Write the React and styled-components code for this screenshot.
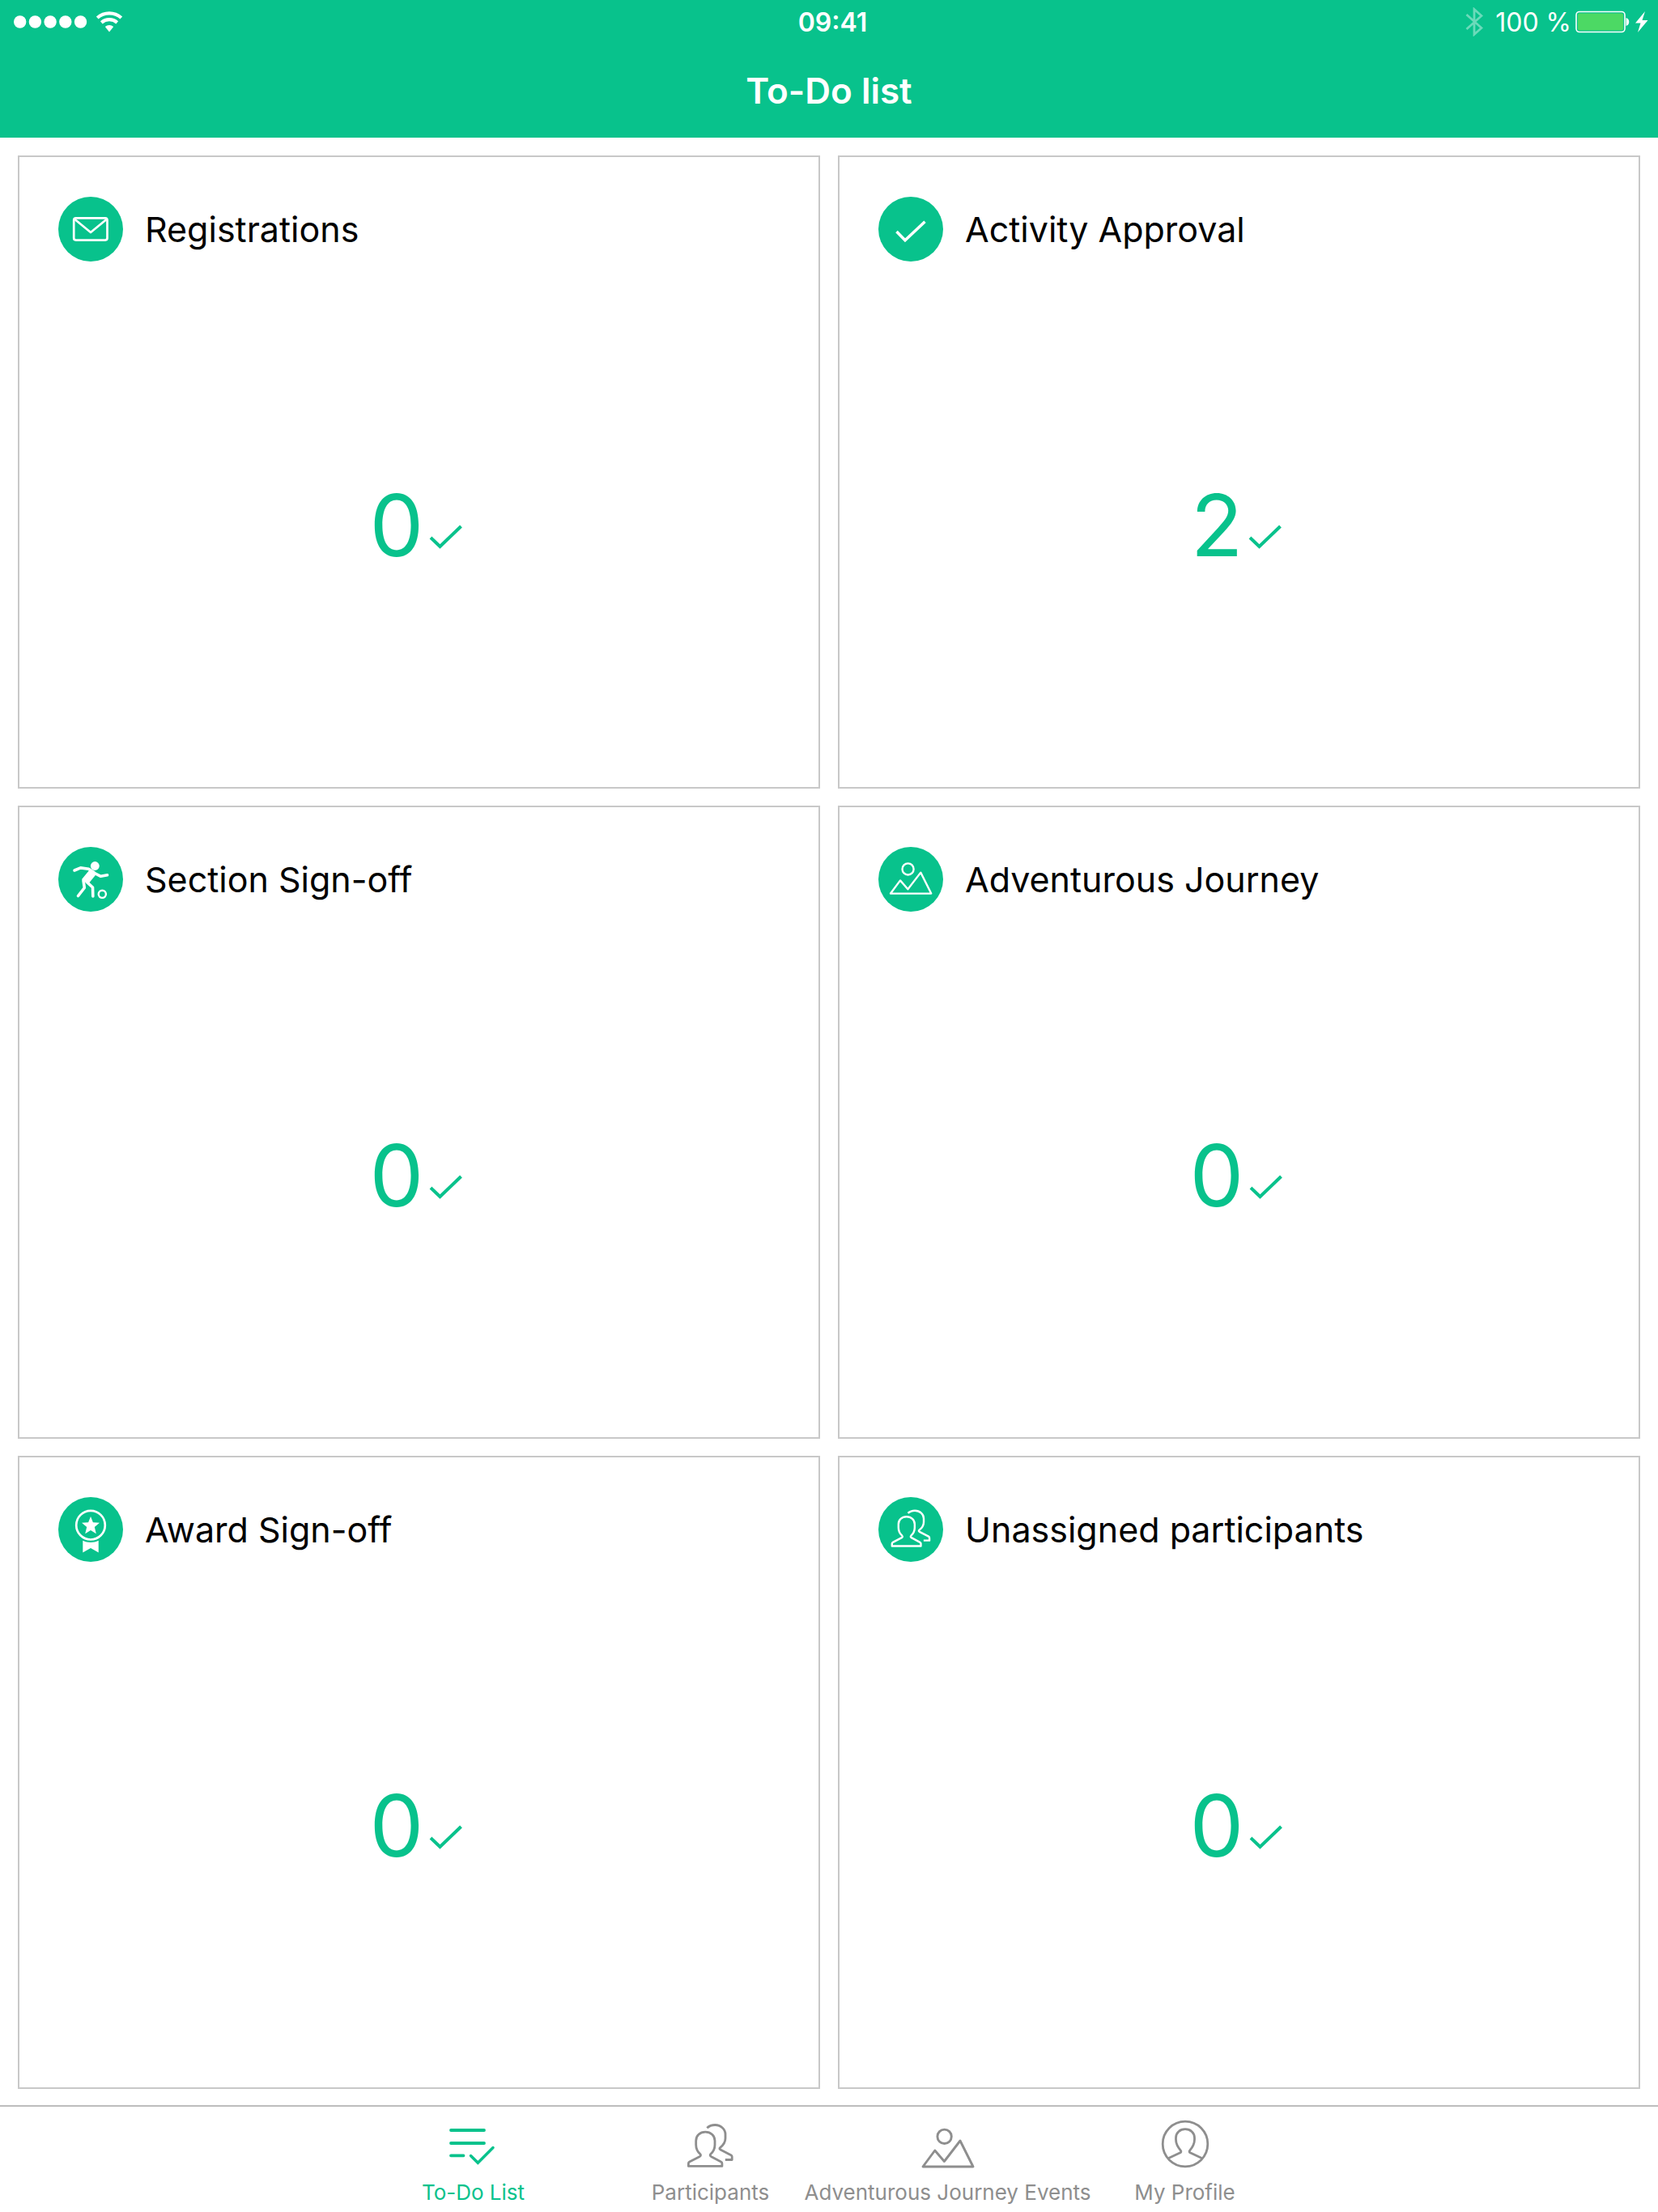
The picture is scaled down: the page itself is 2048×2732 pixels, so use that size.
import React,{useState} from 'react'
import styled,{createGlobalStyle} from 'styled-components';

const GlobalStyle =createGlobalStyle`
*{
  box-sizing:border-box;
}
body{
  margin:0;
  background:#fff;
  font-family:Inter, "Liberation Sans", sans-serif;
  color:#000;
}
svg{
  display:block;
  flex:none;
}`;

const Page =styled.div`
min-height:100vh;
display:flex;
flex-direction:column;
`;

const Header =styled.header`
background:#08c28c;
color:#fff;
h1{
  margin:0;
  padding-bottom:32px;
  text-align:center;
  font-size:44px;
  line-height:52px;
  font-weight:600;
}`;

const StatusBar =styled.div`
display:grid;
grid-template-columns:1fr auto 1fr;
align-items:center;
height:54px;
margin-bottom:32px;
padding:0 8px 0 17px;
font-size:32px;
`;

const StatusGroup =styled.div`
display:flex;
align-items:center;
justify-content:${(props) => (props.$end ? 'flex-end' : 'flex-start')};
gap:${(props) => (props.$end ? '5px' : '10px')};
.bluetooth{
  margin-right:10px;
  opacity:0.4;
}`;

const Time =styled.time`
font-weight:600;
`;

const Grid =styled.main`
flex:1;
display:grid;
grid-template-columns:1fr 1fr;
grid-auto-rows:1fr;
gap:21px 22px;
padding:22px 22px 20px;
`;

const Card =styled.section`
display:flex;
flex-direction:column;
min-height:320px;
padding:49px 48px 0;
border:2px solid #c8c8c8;
`;

const CardTitle =styled.div`
display:flex;
align-items:center;
gap:27px;
h2{
  margin:0;
  font-size:43px;
  line-height:52px;
  font-weight:400;
}`;

const Count =styled.div`
flex:1;
display:flex;
align-items:center;
justify-content:center;
padding-top:3px;
color:#08c28c;
p{
  display:flex;
  align-items:baseline;
  gap:7px;
  margin:0;
  font-size:106px;
  line-height:128px;
}`;

const TabBar =styled.nav`
display:flex;
justify-content:center;
height:132px;
border-top:2px solid #bdbdbd;
`;

const Tab =styled.button`
flex:0 1 293px;
min-width:0;
display:flex;
flex-direction:column;
align-items:center;
gap:14px;
padding:16px 0 0;
border:none;
background:none;
color:${(props) => (props.$active ? '#08c28c' : '#8e8e8e')};
font-family:inherit;
font-size:26px;
line-height:32px;
white-space:nowrap;
cursor:pointer;
`;

const MountainShape = () => (
  <g fill="none" stroke="currentColor" strokeWidth="2.9" strokeLinejoin="round">
    <circle cx="28.6" cy="9.8" r="8.7" />
    <path d="M2 47 16.8 27 28.4 40.5 48 15 64 47z" />
  </g>
)

const PeopleShape = () => (
  <g fill="none" stroke="currentColor" strokeWidth="2.8" strokeLinejoin="round">
    <path d="M22.3 10.2C15.5 10.2 10.7 14.8 10.7 21v5c0 4.6 1.8 8.4 5.2 11.6 1 1 .8 2-.5 2.8L2.7 47c-1 .5-1.3 1-1.3 2v3.4h41.5V49c0-1-.3-1.5-1.3-2L29.3 40.4c-1.3-.8-1.5-1.8-.5-2.8C32.2 34.4 34 30.6 34 26v-5c0-6.2-5-10.8-11.7-10.8z" />
    <path d="M24.3 5.3C27 2.7 30.5 1.5 34.3 1.5 41.5 1.5 47 6.8 47 13v5c0 4.5-2.2 8-6.3 11.4-1.2 1-1 1.8.2 2.5l13 6.800c1 .5 1.3 1 1.3 2V44.5h-8.4" />
  </g>
)

const MailIcon = () => (
  <g fill="none" stroke="#fff" strokeWidth="2.7" strokeLinejoin="round">
    <rect x="19.2" y="26.4" width="41.3" height="27.2" rx="2.5" />
    <path d="M20.5 28 40 44 59.5 28" />
  </g>
)

const CheckIcon = () => (
  <path d="M22.5 43 33 53.7 57.5 30.7" fill="none" stroke="#fff" strokeWidth="3.6" />
)

const FootballIcon = () => (
  <g fill="none" stroke="#fff" strokeWidth="3.6" strokeLinecap="round" strokeLinejoin="round">
    <circle cx="45.3" cy="23.5" r="5.4" fill="#fff" stroke="none" />
    <path d="M20 29 27.5 25.9 37.5 27.2 44 31.5" />
    <path d="M45 32.5 52.5 36.3 60.5 34.8" />
    <path d="M39.5 28.5 46.5 33 37 44.5 30 40z" fill="#fff" strokeWidth="1.5" />
    <path d="M31 41.5 32.3 50.5 24.5 60.5" />
    <path d="M35 43.2 42.5 50 42.8 61" />
    <circle cx="54.3" cy="58.3" r="4.6" strokeWidth="2.4" />
  </g>
)

const MountainIcon = () => (
  <g color="#fff" transform="translate(13.4 19.5) scale(.81)">
    <MountainShape />
  </g>
)

const AwardIcon = () => (
  <g fill="#fff">
    <circle cx="40" cy="34.7" r="17.8" fill="none" stroke="#fff" strokeWidth="2.7" />
    <path d="M40 24 42.9 31.3 51 31.8 44.8 36.9 46.8 45.3 40 40.9 33.2 45.3 35.2 36.9 29 31.8 37.1 31.3z" />
    <path d="M30.3 53.8c6.2 2.9 13.2 2.9 19.4 0v14.6L40 62.9l-9.700 5.5z" />
  </g>
)

const PeopleIcon = () => (
  <g color="#fff" transform="translate(15.6 15.4) scale(.86)">
    <PeopleShape />
  </g>
)

const TodoTabIcon = () => (
  <svg width="60" height="60" viewBox="0 0 60 60" fill="none" stroke="currentColor" strokeWidth="3.8" strokeLinecap="round">
    <path d="M2 13h41M2 29h41M2 44.3h15.5" />
    <path d="M26.5 44.5 35.3 53.3 54 34.5" strokeWidth="3.5" />
  </svg>
)

const PeopleTabIcon = () => (
  <svg width="57" height="60" viewBox="0 -5 57 60">
    <PeopleShape />
  </svg>
)

const MountainTabIcon = () => (
  <svg width="66" height="60" viewBox="0 -11 66 60">
    <MountainShape />
  </svg>
)

const ProfileTabIcon = () => (
  <svg width="60" height="60" viewBox="0 0 60 60" fill="none" stroke="currentColor" strokeWidth="2.8">
    <circle cx="30" cy="30" r="27.8" />
    <path d="M9.5 47.5 23.8 40.8c1.2-.7 1.4-1.6.6-2.7C20.5 33.5 18.5 29.5 18.5 24.5v-2C18.5 16 23.5 11.7 30 11.7S41.5 16 41.5 22.5v2c0 5-2 9-5.9 13.6-.8 1.1-.6 2 .6 2.7L50.5 47.5" />
  </svg>
)

const cards = [
  { title: 'Registrations', count: 0, Icon: MailIcon },
  { title: 'Activity Approval', count: 2, Icon: CheckIcon },
  { title: 'Section Sign-off', count: 0, Icon: FootballIcon },
  { title: 'Adventurous Journey', count: 0, Icon: MountainIcon },
  { title: 'Award Sign-off', count: 0, Icon: AwardIcon },
  { title: 'Unassigned participants', count: 0, Icon: PeopleIcon },
]

const tabs = [
  { label: 'To-Do List', Icon: TodoTabIcon },
  { label: 'Participants', Icon: PeopleTabIcon },
  { label: 'Adventurous Journey Events', Icon: MountainTabIcon },
  { label: 'My Profile', Icon: ProfileTabIcon },
]

const Status = () => (
  <StatusBar>
    <StatusGroup>
      <svg width="91" height="16" viewBox="0 0 91 16" fill="#fff">
        {[0, 1, 2, 3, 4].map((i) => (
          <circle key={i} cx={7.7 + i * 18.7} cy="8" r="7.7" />
        ))}
      </svg>
      <svg width="34" height="26" viewBox="0 0 34 26" fill="none" stroke="#fff" strokeWidth="4.2">
        <path d="M2.2 8A22.5 22.5 0 0 1 31.8 8" />
        <path d="M7.3 13.8A14.8 14.8 0 0 1 26.7 13.8" />
        <path d="M17 25.5 11.8 18.9A8.3 8.3 0 0 1 22.2 18.9z" fill="#fff" stroke="none" />
      </svg>
    </StatusGroup>
    <Time>09:41</Time>
    <StatusGroup $end>
      <svg className="bluetooth" width="22" height="36" viewBox="0 0 22 36" fill="none" stroke="#fff" strokeWidth="2.8">
        <path d="M1.5 9 20 25.5 11 33.5V2.5L20 10.5 1.5 27" />
      </svg>
      <span>100 %</span>
      <svg width="94" height="28" viewBox="0 0 94 28">
        <rect x="1" y="1.5" width="60" height="25" rx="4" fill="none" stroke="#fff" strokeWidth="1.6" />
        <rect x="3" y="3.5" width="56" height="21" rx="2" fill="#4cd964" />
        <path d="M62.5 9c5 1 5 9 0 10z" fill="#fff" />
        <path d="M86 1 74 15.5h6.5L77 27 89.500 12h-7z" fill="#fff" />
      </svg>
    </StatusGroup>
  </StatusBar>
)

const App = () => {
  const[active,setActive]=useState('To-Do List')
  return (
    <Page>
      <GlobalStyle />
      <Header>
        <Status />
        <h1>To-Do list</h1>
      </Header>
      <Grid>
        {cards.map(({ title, count, Icon }) => (
          <Card key={title}>
            <CardTitle>
              <svg width="80" height="80" viewBox="0 0 80 80">
                <circle cx="40" cy="40" r="40" fill="#08c28c" />
                <Icon />
              </svg>
              <h2>{title}</h2>
            </CardTitle>
            <Count>
              <p>
                {count}
                <svg width="48" height="40" viewBox="0 0 48 40" fill="none" stroke="currentColor" strokeWidth="4">
                  <path d="M2 17 13.5 28 39.5 3" />
                </svg>
              </p>
            </Count>
          </Card>
        ))}
      </Grid>
      <TabBar>
        {tabs.map(({ label, Icon }) => (
          <Tab key={label} type="button" $active={active === label} onClick={()=>setActive(label)}>
            <Icon />
            {label}
          </Tab>
        ))}
      </TabBar>
    </Page>
  )
}

export default App
